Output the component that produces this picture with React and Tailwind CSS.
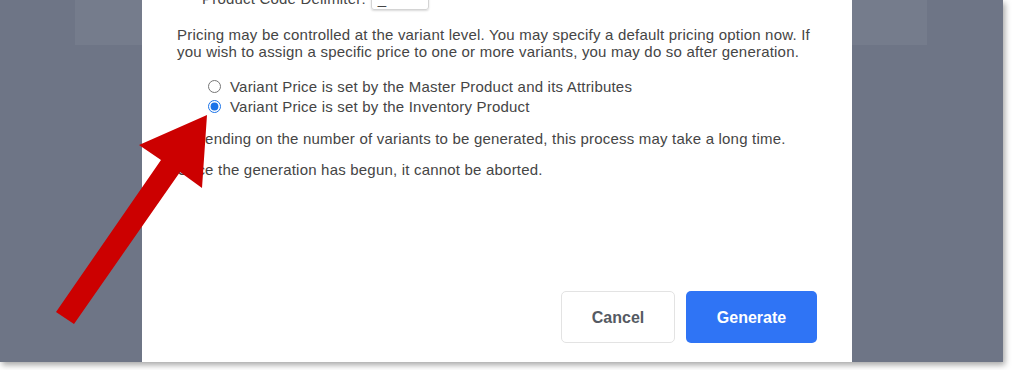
import React from "react";

function Arrow() {
  return (
    <svg
      className="absolute left-0 top-0 z-20 pointer-events-none"
      width="1024"
      height="370"
      viewBox="0 0 1024 370"
    >
      <polygon
        points="207,115 139,145 161,160 56,312 74,324 180,172 202,188"
        fill="#cc0000"
      />
    </svg>
  );
}

function RadioRow({ checked, label }) {
  return (
    <label className="flex items-center h-[20px] gap-[9px]">
      <input
        type="radio"
        name="pricing"
        defaultChecked={checked}
        className="m-0 w-[13px] h-[13px] accent-[#1a73e8]"
      />
      <span>{label}</span>
    </label>
  );
}

export default function App() {
  return (
    <div
      className="relative w-[1024px] h-[370px] bg-white overflow-hidden"
      style={{ fontFamily: '"Liberation Sans", Arial, sans-serif' }}
    >
      <div className="relative w-[1003px] h-[362px] bg-[#6e7586] shadow-[2px_3px_6px_rgba(0,0,0,0.35)] overflow-hidden">
        {/* page content behind the overlay */}
        <div className="absolute left-[75px] top-0 w-[852px] h-[45px] bg-[#757c8c]" />

        <div className="relative z-10 ml-[142px] w-[710px] h-full bg-white flex flex-col text-[15px] leading-[17px] tracking-[0.2px] text-[#454545]">
          <div className="flex flex-col pl-[35px] pr-[20px] -mt-[14px]">
            <div className="flex items-center h-[24px] pl-[25px] gap-[5px]">
              <span>Product Code Delimiter:</span>
              <div className="w-[58px] h-[24px] border border-[#d4d4d4] rounded-[3px] shadow-[0_1px_2px_rgba(0,0,0,0.15)] flex items-center px-[6px]">
                _
              </div>
            </div>

            <p className="mt-[16px] whitespace-nowrap">
              Pricing may be controlled at the variant level. You may specify a default pricing option now. If
              <br />
              you wish to assign a specific price to one or more variants, you may do so after generation.
            </p>

            <div className="mt-[16px] pl-[31px] flex flex-col">
              <RadioRow label="Variant Price is set by the Master Product and its Attributes" />
              <RadioRow checked label="Variant Price is set by the Inventory Product" />
            </div>

            <p className="mt-[14px]">
              Depending on the number of variants to be generated, this process may take a long time.
            </p>
            <p className="mt-[14px]">Once the generation has begun, it cannot be aborted.</p>
          </div>

          <div className="mt-auto flex justify-end gap-[11px] pr-[35px] pb-[19px]">
            <button className="w-[114px] h-[52px] rounded-[5px] border border-[#e3e3e3] bg-white text-[16px] tracking-normal font-bold text-[#555a63]">
              Cancel
            </button>
            <button className="w-[131px] h-[52px] rounded-[5px] bg-[#2f74f5] text-[16px] tracking-normal font-bold text-white">
              Generate
            </button>
          </div>
        </div>
      </div>
      <Arrow />
    </div>
  );
}
